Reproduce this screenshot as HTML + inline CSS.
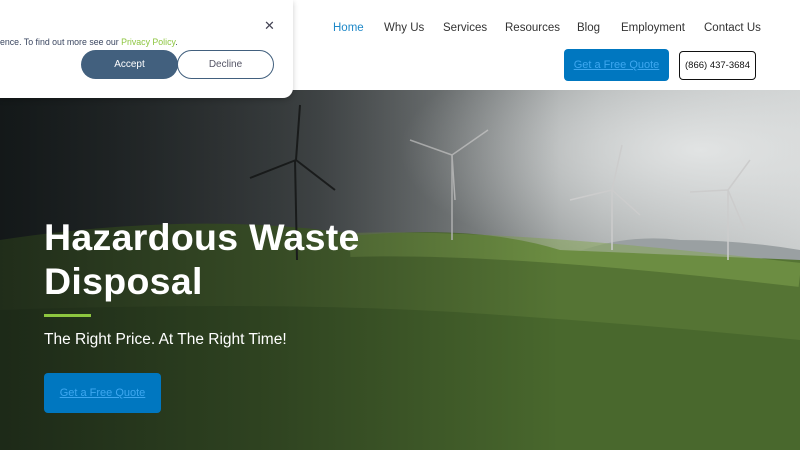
<!DOCTYPE html>
<html><head><meta charset="utf-8"><style>
*{margin:0;padding:0;box-sizing:border-box}
body{width:800px;height:450px;overflow:hidden;position:relative;font-family:"Liberation Sans",sans-serif;background:#fff}
.hero{position:absolute;left:0;top:90px;width:800px;height:360px;
background:
radial-gradient(ellipse 300px 120px at 700px 60px,rgba(230,232,232,.9),rgba(230,232,232,0)),
linear-gradient(90deg,#2a2e30 0,#5a5e60 40%,#a8acac 75%,#c8cbcb 100%);}
.hills{position:absolute;left:0;top:90px;width:800px;height:360px}
.shade{position:absolute;left:0;top:90px;width:800px;height:360px;background:linear-gradient(90deg,rgba(10,15,15,.7) 0,rgba(10,15,15,.4) 35%,rgba(0,0,0,0) 70%)}
.nav{position:absolute;top:22px;font-size:11.5px;color:#333;white-space:nowrap}
h1{position:absolute;left:44px;top:215px;color:#fff;font-size:37.5px;line-height:44px;font-weight:bold;letter-spacing:.3px}
.bar{position:absolute;left:44px;top:314px;width:47px;height:3px;background:#8dc63f}
.sub{position:absolute;left:44px;top:331px;color:#fff;font-size:15.5px}
.btn{position:absolute;background:#0077c0;border-radius:4px;color:#3da7f0;text-decoration:underline;font-size:11px;display:flex;align-items:center;justify-content:center;white-space:nowrap}
.cookie{position:absolute;left:0;top:0;width:293px;height:98px;background:#fff;border-radius:0 0 10px 0;box-shadow:0 2px 6px rgba(0,0,0,.2)}
</style></head><body>
<div class="hero"></div>
<svg class="hills" viewBox="0 0 800 360">
<path d="M520 190 Q600 140 680 150 Q740 150 800 160 L800 360 L520 360Z" fill="#9aa0a2"/>
<path d="M0 150 Q200 120 360 145 Q480 135 560 160 Q680 165 800 170 L800 360 L0 360Z" fill="#557434"/>
<path d="M0 220 Q300 210 500 225 Q650 235 800 250 L800 360 L0 360Z" fill="#46652c" opacity=".8"/>
<path d="M350 155 Q500 150 800 185" stroke="#84a650" stroke-width="24" fill="none" opacity=".5"/>
<g stroke="#222" stroke-width="2" fill="none"><line x1="295" y1="70" x2="297" y2="170"/><path d="M296 70 L300 15 M296 70 L250 88 M296 70 L335 100"/></g>
<g stroke="#ccc" stroke-width="1.5" fill="none"><line x1="452" y1="65" x2="452" y2="150"/><path d="M452 65 L488 40 M452 65 L410 50 M452 65 L455 110"/>
<line x1="612" y1="100" x2="612" y2="160"/><path d="M612 100 L622 55 M612 100 L570 110 M612 100 L640 125"/>
<line x1="728" y1="100" x2="728" y2="170"/><path d="M728 100 L750 70 M728 100 L690 102 M728 100 L745 140"/></g>
</svg>
<div class="shade"></div>
<div style="position:absolute;left:0;top:0;width:800px;height:90px;background:#fff"></div>
<span class="nav" style="left:333px;color:#1e88c8">Home</span>
<span class="nav" style="left:384px">Why Us</span>
<span class="nav" style="left:443px">Services</span>
<span class="nav" style="left:505px">Resources</span>
<span class="nav" style="left:577px">Blog</span>
<span class="nav" style="left:621px">Employment</span>
<span class="nav" style="left:704px">Contact Us</span>
<div class="btn" style="left:564px;top:49px;width:105px;height:32px">Get a Free Quote</div>
<div style="position:absolute;left:679px;top:51px;width:77px;height:29px;border:1.5px solid #111;border-radius:4px;font-size:9.5px;display:flex;align-items:center;justify-content:center;color:#111;white-space:nowrap">(866) 437-3684</div>
<div class="cookie">
<div style="position:absolute;left:0;top:37px;font-size:8.8px;color:#3a4660;white-space:nowrap">ence. To find out more see our <span style="color:#8dc63f">Privacy Policy</span>.</div>
<div style="position:absolute;left:264px;top:18px;font-size:13px;color:#445">✕</div>
<div style="position:absolute;left:81px;top:50px;width:97px;height:29px;background:#42607e;border-radius:15px;color:#fff;font-size:10px;display:flex;align-items:center;justify-content:center">Accept</div>
<div style="position:absolute;left:177px;top:50px;width:97px;height:29px;border:1px solid #42607e;border-radius:15px;color:#556;font-size:10px;display:flex;align-items:center;justify-content:center">Decline</div>
</div>
<h1>Hazardous Waste<br>Disposal</h1>
<div class="bar"></div>
<div class="sub">The Right Price. At The Right Time!</div>
<div class="btn" style="left:44px;top:373px;width:117px;height:40px">Get a Free Quote</div>
</body></html>
